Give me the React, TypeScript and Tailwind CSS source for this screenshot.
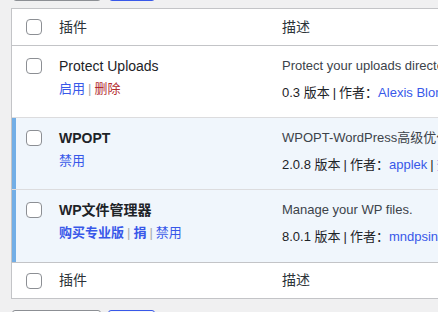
import React from "react";

const font = { fontFamily: '"Liberation Sans", "Noto Sans CJK SC", sans-serif' };

function Box() {
  return <span className="block w-4 h-4 rounded-[4px] border border-[#8c8f94] bg-white" />;
}

function Sep({ dark }: { dark?: boolean }) {
  return <span className={dark ? "text-[#1d2327] px-[3px]" : "text-[#a7aaad] px-[3px]"}>|</span>;
}

type Row = {
  title: string;
  active: boolean;
  actions: React.ReactNode;
  desc: string;
  version: string;
  author: string;
  more?: boolean;
};

const rows: Row[] = [
  {
    title: "Protect Uploads",
    active: false,
    actions: (
      <>
        <span className="text-[#3858e9]">启用</span>
        <Sep />
        <span className="text-[#b32d2e]">删除</span>
      </>
    ),
    desc: "Protect your uploads directory from listing",
    version: "0.3",
    author: "Alexis Blondin",
  },
  {
    title: "WPOPT",
    active: true,
    actions: <span className="text-[#3858e9]">禁用</span>,
    desc: "WPOPT-WordPress高级优化插件",
    version: "2.0.8",
    author: "applek",
    more: true,
  },
  {
    title: "WP文件管理器",
    active: true,
    actions: (
      <>
        <span className="text-[#3858e9] font-bold">购买专业版</span>
        <Sep />
        <span className="text-[#3858e9] font-bold">捐</span>
        <Sep />
        <span className="text-[#3858e9]">禁用</span>
      </>
    ),
    desc: "Manage your WP files.",
    version: "8.0.1",
    author: "mndpsingh287",
  },
];

function HeadRow({ h, border }: { h: string; border: string }) {
  return (
    <div className={`flex items-center ${h} ${border} border-[#c3c4c7] text-[14px] text-[#2c3338]`}>
      <div className="w-[37px] pl-[14px] shrink-0">
        <Box />
      </div>
      <div className="w-[223px] pl-[10px] shrink-0">插件</div>
      <div className="pl-[10px]">描述</div>
    </div>
  );
}

export default function App() {
  return (
    <div className="w-[438px] h-[312px] overflow-hidden bg-[#f0f0f1]" style={font}>
      <div className="flex gap-[8px] pl-[13px] -mt-[29px]">
        <div className="w-[88px] h-[30px] rounded-[3px] border border-[#8c8f94] bg-white" />
        <div className="w-[46px] h-[30px] rounded-[3px] border border-[#3858e9] bg-[#f6f7f7]" />
      </div>
      <div className="ml-[11px] mt-[7px] w-[600px] border border-[#c3c4c7] bg-white">
        <HeadRow h="h-[37px]" border="border-b" />
        {rows.map((r, i) => (
          <div
            key={i}
            className={`flex h-[72px] ${i < 2 ? "border-b border-[#dcdcde]" : ""} ${
              r.active ? "bg-[#f0f6fc]" : "bg-white"
            }`}
          >
            <div
              className={`w-[37px] shrink-0 pt-[12px] ${
                r.active ? "border-l-4 border-[#72aee6] pl-[10px]" : "pl-[14px]"
              }`}
            >
              <Box />
            </div>
            <div className="w-[223px] shrink-0 pl-[10px] pt-[10px]">
              <div
                className={`text-[14px] leading-[20px] text-[#1d2327] ${
                  r.active ? "font-bold" : "font-normal"
                }`}
              >
                {r.title}
              </div>
              <div className="mt-[3px] text-[13px] leading-[20px] whitespace-nowrap">{r.actions}</div>
            </div>
            <div className="pl-[10px] pt-[10px] text-[13px] leading-[20px] text-[#3c434a] whitespace-nowrap">
              <div>{r.desc}</div>
              <div className="mt-[7px] text-[#1d2327]">
                {r.version} 版本
                <Sep dark />
                作者：<span className="text-[#3858e9]">{r.author}</span>
                {r.more && (
                  <>
                    <Sep dark />
                    <span className="text-[#3858e9]">查看详情</span>
                  </>
                )}
              </div>
            </div>
          </div>
        ))}
        <div className="border-t border-[#c3c4c7]">
          <HeadRow h="h-[35px]" border="" />
        </div>
      </div>
      <div className="flex gap-[7px] pl-[12px] mt-[11px]">
        <div className="w-[89px] h-[30px] rounded-[3px] border border-[#8c8f94] bg-white" />
        <div className="w-[47px] h-[30px] rounded-[3px] border border-[#3858e9] bg-[#f6f7f7]" />
      </div>
    </div>
  );
}
